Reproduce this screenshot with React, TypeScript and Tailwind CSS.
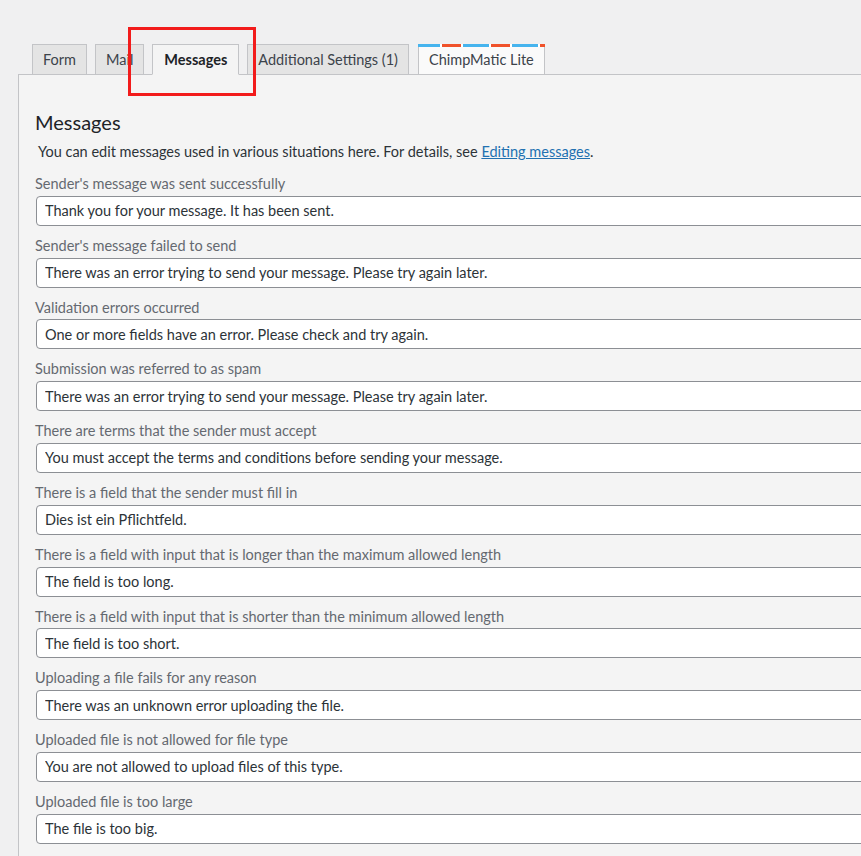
const font = "font-['Lato','Liberation_Sans',sans-serif]";

const tabs = [
  { label: "Form" },
  { label: "Mail" },
  { label: "Messages", active: true },
  { label: "Additional Settings (1)" },
];

const fields = [
  { label: "Sender's message was sent successfully", value: "Thank you for your message. It has been sent." },
  { label: "Sender's message failed to send", value: "There was an error trying to send your message. Please try again later." },
  { label: "Validation errors occurred", value: "One or more fields have an error. Please check and try again." },
  { label: "Submission was referred to as spam", value: "There was an error trying to send your message. Please try again later." },
  { label: "There are terms that the sender must accept", value: "You must accept the terms and conditions before sending your message." },
  { label: "There is a field that the sender must fill in", value: "Dies ist ein Pflichtfeld." },
  { label: "There is a field with input that is longer than the maximum allowed length", value: "The field is too long." },
  { label: "There is a field with input that is shorter than the minimum allowed length", value: "The field is too short." },
  { label: "Uploading a file fails for any reason", value: "There was an unknown error uploading the file." },
  { label: "Uploaded file is not allowed for file type", value: "You are not allowed to upload files of this type." },
  { label: "Uploaded file is too large", value: "The file is too big." },
];

function Tab({ label, active }: { label: string; active?: boolean }) {
  if (active) {
    return (
      <div className="h-[31px] -mb-px px-[11px] flex items-center border border-[#c3c4c7] border-b-[#f4f4f4] bg-[#f4f4f4] text-[14.5px] font-bold text-[#1d2327]">
        {label}
      </div>
    );
  }
  return (
    <div className="h-[30px] px-[10px] flex items-center border border-[#c3c4c7] border-b-0 bg-[#e4e4e4] text-[14.5px] text-[#3c434a]">
      {label}
    </div>
  );
}

export default function App() {
  return (
    <div className={`relative w-[861px] h-[856px] overflow-hidden bg-[#f0f0f1] ${font}`}>
      <div className="pt-[44px] pl-[18px]">
        <div className="flex items-end gap-[8px] pl-[14px]">
          {tabs.map((t) => (
            <Tab key={t.label} label={t.label} active={t.active} />
          ))}
          <div className="h-[30px] ml-px px-[10px] flex items-center border border-[#c3c4c7] border-t-0 border-b-0 bg-[#fafafa] text-[14.5px] text-[#3c434a] relative">
            <div className="absolute -left-px -right-px top-0 h-[3px] bg-[repeating-linear-gradient(90deg,#46b4ee_0px,#46b4ee_22px,#ffffff_22px,#ffffff_24px,#f0522b_24px,#f0522b_43px,#ffffff_43px,#ffffff_45px,#46b4ee_45px,#46b4ee_49px)]" />
            <span className="pt-[2px]">ChimpMatic Lite</span>
          </div>
        </div>

        <div className="w-[900px] border border-[#c3c4c7] bg-[#f4f4f4] pl-[16px] pt-[35px] pb-[40px]">
          <h2 className="text-[20px] leading-[24px] text-[#1d2327]">Messages</h2>
          <p className="mt-[8px] ml-[3px] text-[14.5px] leading-[20px] text-[#2c3338]">
            You can edit messages used in various situations here. For details, see{" "}
            <a className="text-[#2271b1] underline">Editing messages</a>.
          </p>
          <div className="mt-[13px] flex flex-col gap-[11px]">
            {fields.map((f, i) => (
              <div key={i} className="flex flex-col gap-[2px]">
                <label className="text-[14.5px] leading-[18.8px] text-[#646970]">{f.label}</label>
                <input
                  readOnly
                  value={f.value}
                  className={`ml-px w-[880px] h-[30px] px-[8px] rounded-[4px] border border-[#8c8f94] bg-white text-[14.5px] text-[#2c3338] outline-none ${font}`}
                />
              </div>
            ))}
          </div>
        </div>
      </div>

      <div className="absolute left-[128px] top-[27px] w-[128px] h-[69px] border-[3px] border-[#f21b1b]" />
    </div>
  );
}
